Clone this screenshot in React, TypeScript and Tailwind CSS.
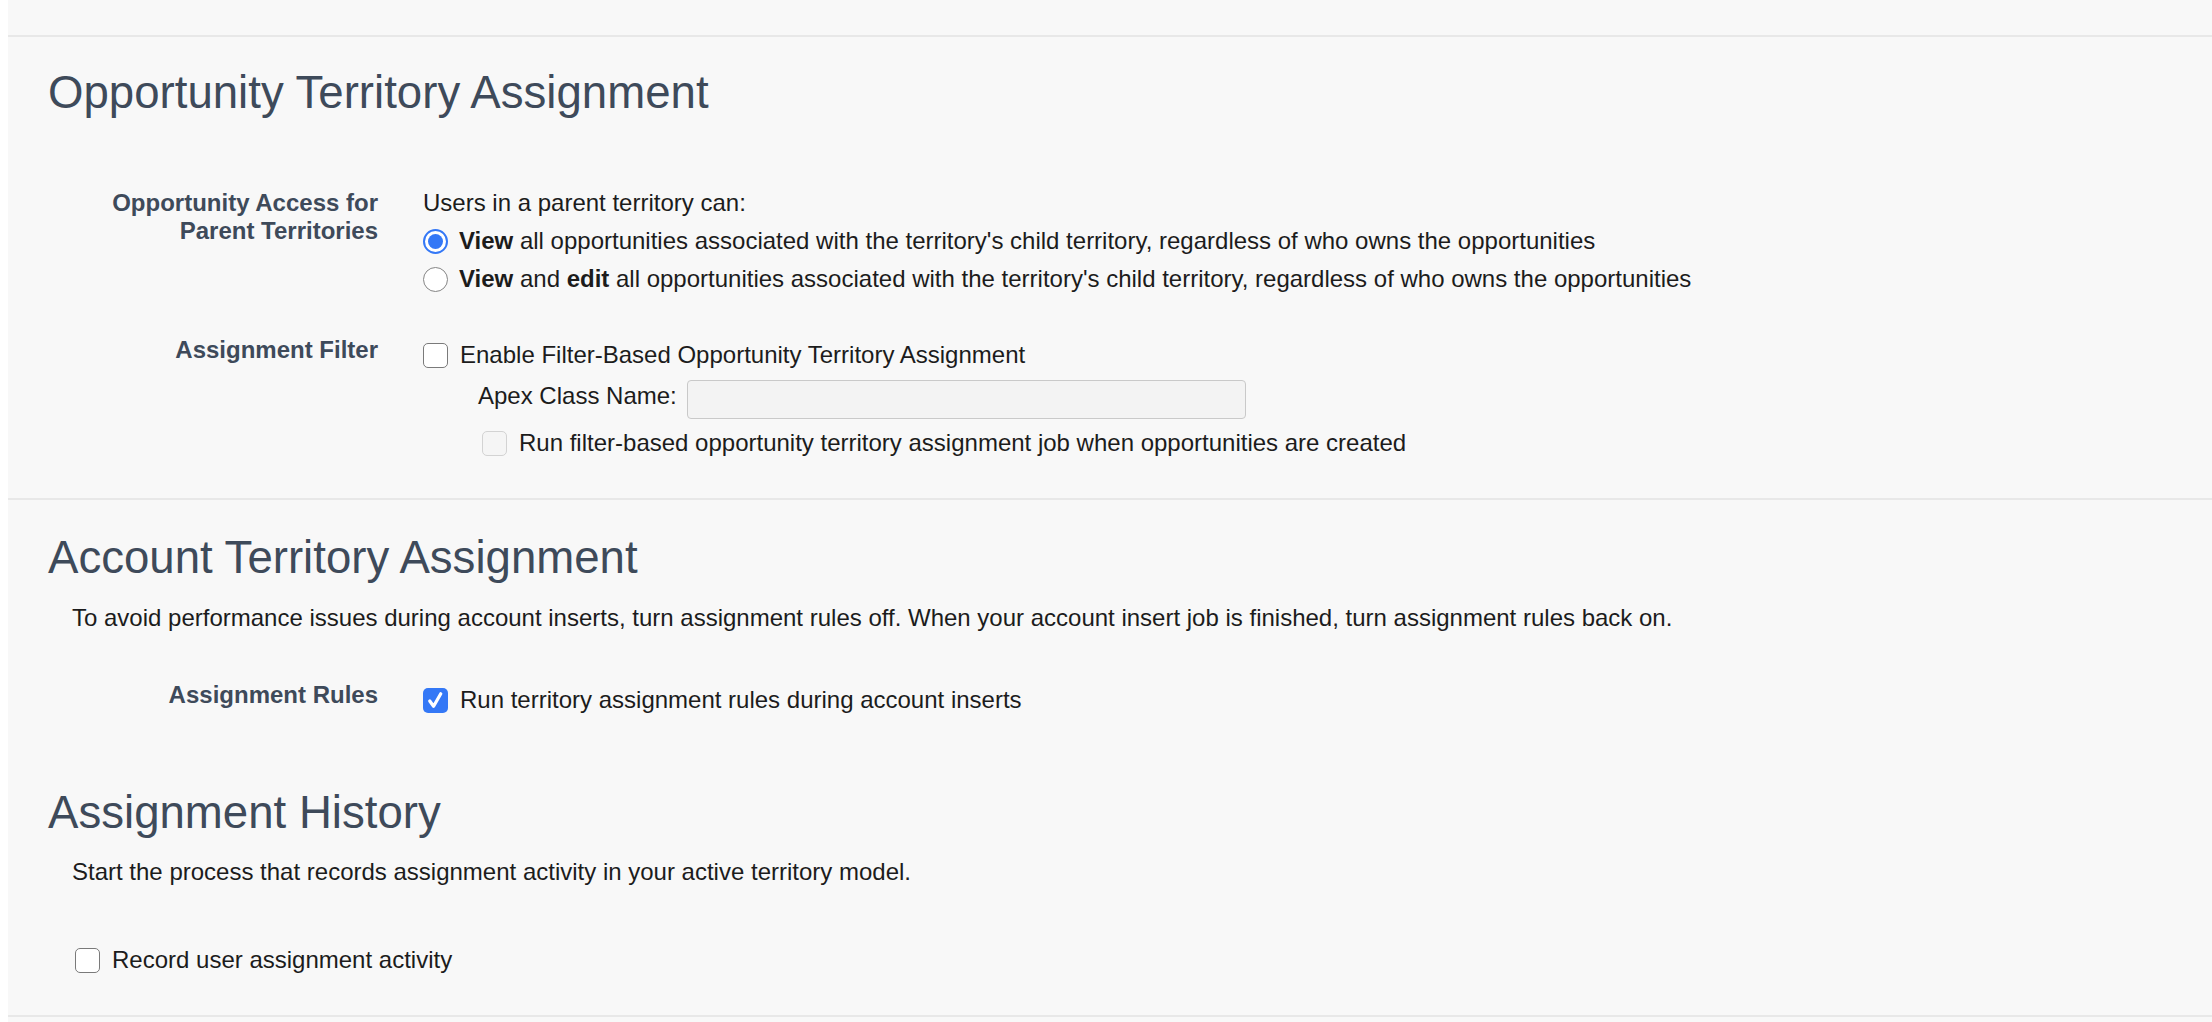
import React from 'react'

const Radio = ({ checked }: { checked?: boolean }) =>
    checked ? (
        <span className="w-[25px] h-[25px] shrink-0 rounded-full border-2 border-[#3478f6] bg-white flex items-center justify-center">
            <span className="w-[15px] h-[15px] rounded-full bg-[#3478f6]" />
        </span>
    ) : (
        <span className="w-[25px] h-[25px] shrink-0 rounded-full border-[1.5px] border-[#858585] bg-white" />
    )

const Checkbox = ({ checked, disabled }: { checked?: boolean; disabled?: boolean }) => {
    if (checked) {
        return (
            <span className="w-[25px] h-[25px] shrink-0 rounded-[5px] bg-[#3478f6] flex items-center justify-center">
                <svg viewBox="0 0 24 24" className="w-[23px] h-[23px]" fill="none" stroke="white" strokeWidth="3.4" strokeLinecap="round" strokeLinejoin="round">
                    <path d="M6 12.5l4 5.5L17.5 5" />
                </svg>
            </span>
        )
    }
    if (disabled) {
        return <span className="w-[25px] h-[25px] shrink-0 rounded-[5px] border-[1.5px] border-[#d3d3d3] bg-[#f5f5f5]" />
    }
    return <span className="w-[25px] h-[25px] shrink-0 rounded-[5px] border-[1.5px] border-[#7a7a7a] bg-white" />
}

const Label = ({ children, className = '' }: { children: React.ReactNode; className?: string }) => (
    <div className={`w-[370px] shrink-0 text-right font-bold text-[24px] leading-[28px] text-[#3e4a5a] ${className}`}>
        {children}
    </div>
)

const Heading = ({ children, className = '' }: { children: React.ReactNode; className?: string }) => (
    <h2 className={`pl-[40px] text-[45.6px] leading-[45px] text-[#3e4a5a] ${className}`}>{children}</h2>
)

export default function App() {
    return (
        <div className="min-h-screen bg-white pl-[8px] font-['Liberation_Sans',Arial,sans-serif] text-[#1c1c1c]">
            <div className="bg-[#f8f8f8] min-h-[1022px]">
                <div className="h-[37px] border-b-2 border-[#e8e8e8]" />

                {/* Opportunity Territory Assignment */}
                <section className="border-b-2 border-[#e8e8e8] pb-[36px]">
                    <Heading className="pt-[33px]">Opportunity Territory Assignment</Heading>

                    <div className="flex mt-[69px]">
                        <Label className="pt-[5px]">
                            Opportunity Access for
                            <br />
                            Parent Territories
                        </Label>
                        <div className="ml-[45px] text-[24px] leading-[28px]">
                            <div className="h-[38px] flex items-center">Users in a parent territory can:</div>
                            <div className="h-[38px] flex items-center gap-[11px]">
                                <Radio checked />
                                <span>
                                    <b>View</b> all opportunities associated with the territory's child territory, regardless of who owns the opportunities
                                </span>
                            </div>
                            <div className="h-[38px] flex items-center gap-[11px]">
                                <Radio />
                                <span>
                                    <b>View</b> and <b>edit</b> all opportunities associated with the territory's child territory, regardless of who owns the opportunities
                                </span>
                            </div>
                        </div>
                    </div>

                    <div className="flex mt-[38px]">
                        <Label>Assignment Filter</Label>
                        <div className="ml-[45px] text-[24px] leading-[28px]">
                            <div className="h-[38px] flex items-center gap-[12px]">
                                <Checkbox />
                                <span>Enable Filter-Based Opportunity Territory Assignment</span>
                            </div>
                            <div className="mt-[6px] h-[39px] flex items-start gap-[10px] pl-[55px]">
                                <span className="mt-[2px]">Apex Class Name:</span>
                                <input
                                    type="text"
                                    disabled
                                    className="w-[559px] h-[39px] rounded-[4px] border-[1.5px] border-[#c9c9c9] bg-[#f3f3f3]"
                                />
                            </div>
                            <div className="mt-[5px] h-[38px] flex items-center gap-[12px] pl-[59px]">
                                <Checkbox disabled />
                                <span>Run filter-based opportunity territory assignment job when opportunities are created</span>
                            </div>
                        </div>
                    </div>
                </section>

                {/* Account Territory Assignment */}
                <section>
                    <Heading className="pt-[35px]">Account Territory Assignment</Heading>
                    <p className="mt-[24px] pl-[64px] text-[24px] leading-[28px]">
                        To avoid performance issues during account inserts, turn assignment rules off. When your account insert job is finished, turn assignment rules back on.
                    </p>
                    <div className="flex mt-[49px]">
                        <Label>Assignment Rules</Label>
                        <div className="ml-[45px] text-[24px] leading-[28px]">
                            <div className="h-[38px] flex items-center gap-[12px]">
                                <Checkbox checked />
                                <span>Run territory assignment rules during account inserts</span>
                            </div>
                        </div>
                    </div>
                </section>

                {/* Assignment History */}
                <section className="border-b-2 border-[#e8e8e8] pb-[36px]">
                    <Heading className="mt-[71px]">Assignment History</Heading>
                    <p className="mt-[23px] pl-[64px] text-[24px] leading-[28px]">
                        Start the process that records assignment activity in your active territory model.
                    </p>
                    <div className="mt-[55px] pl-[67px] h-[38px] flex items-center gap-[12px] text-[24px] leading-[28px]">
                        <Checkbox />
                        <span>Record user assignment activity</span>
                    </div>
                </section>
            </div>
        </div>
    )
}
